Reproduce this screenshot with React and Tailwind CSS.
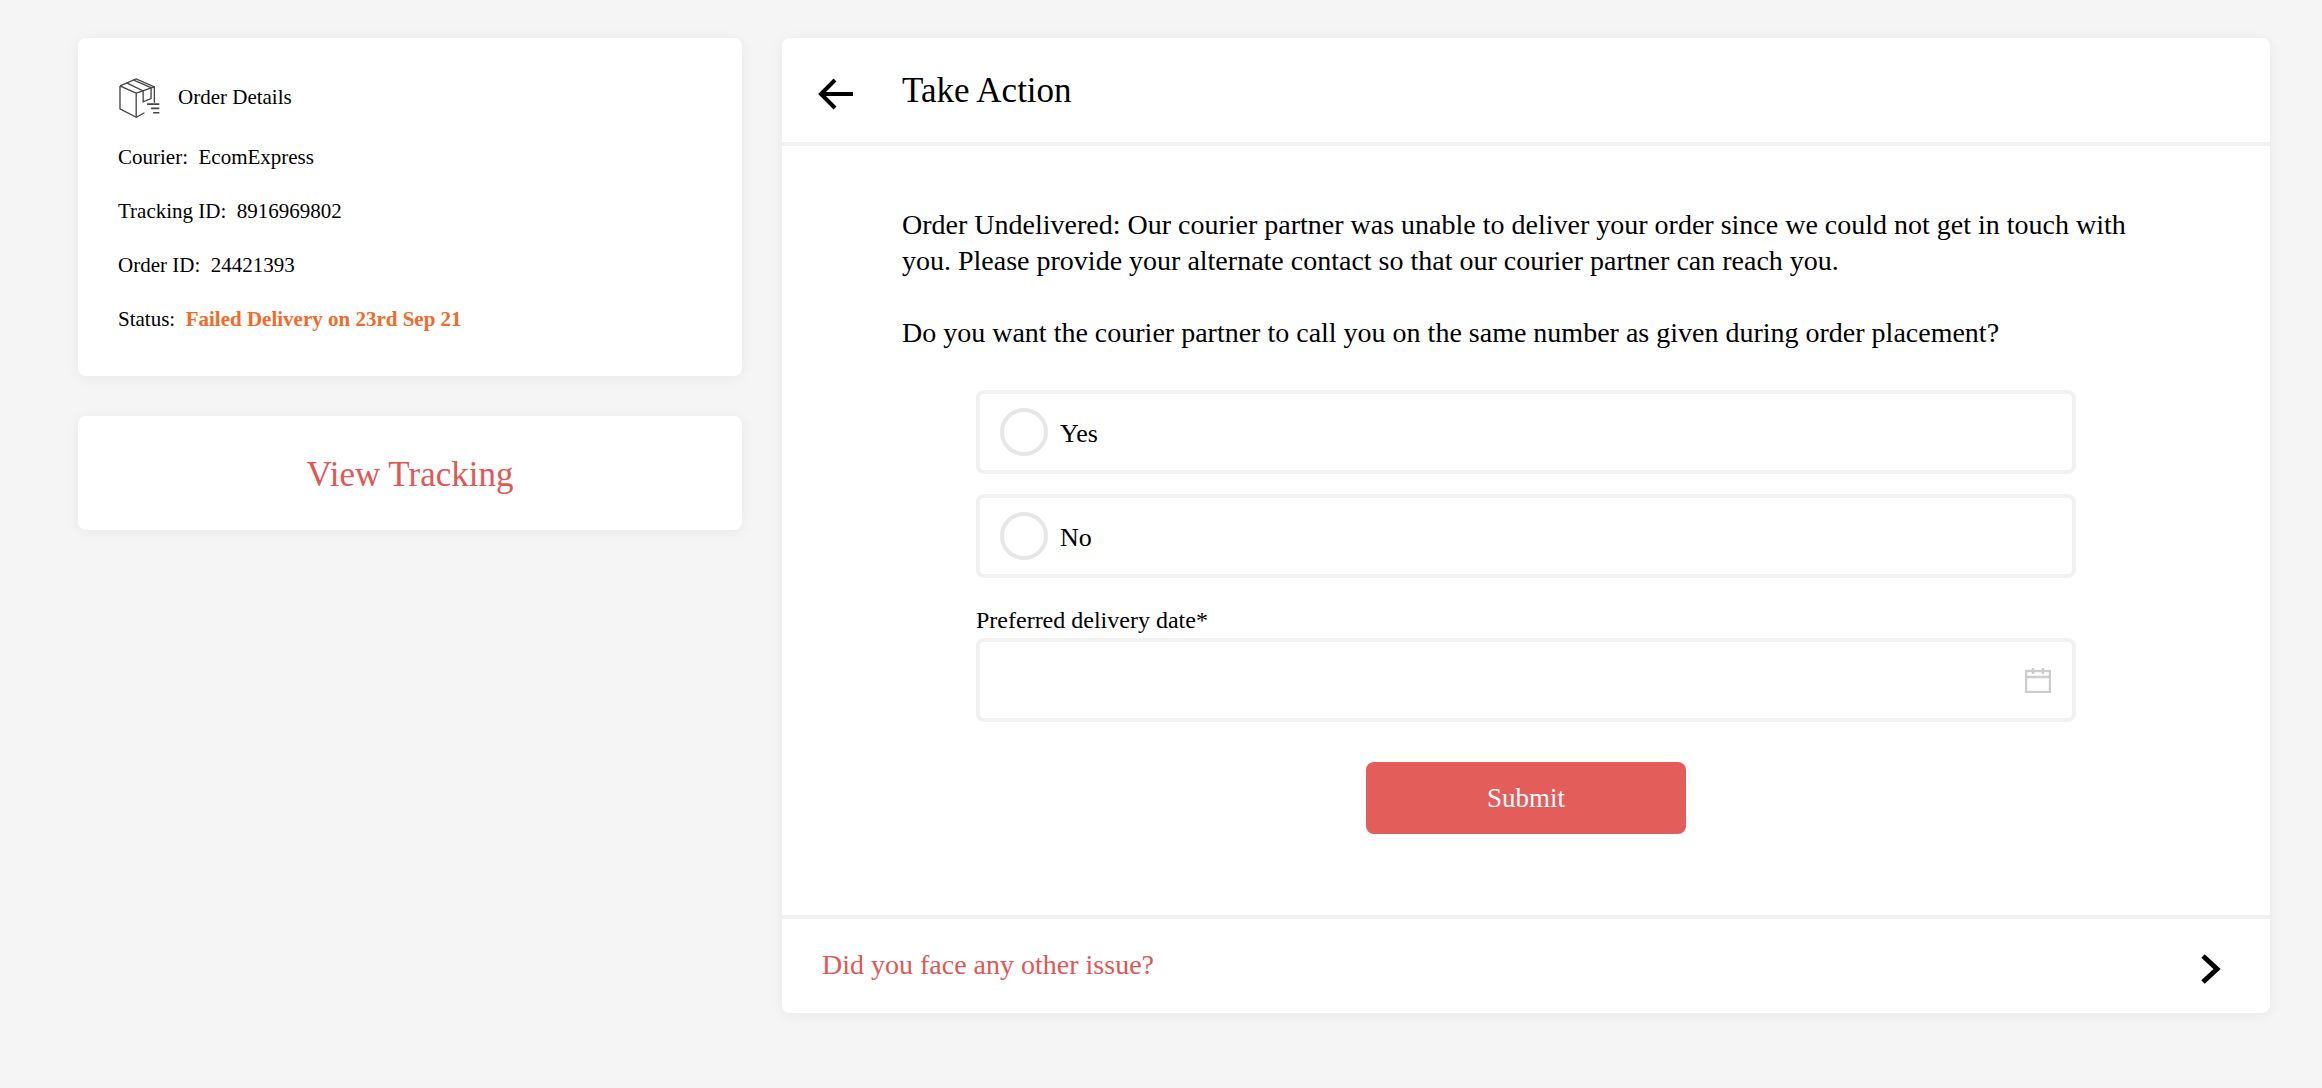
const PackageIcon = () => (
  <svg width="43" height="42" viewBox="50 20 130 127" fill="none" stroke="#444" strokeWidth="4">
    <path d="M56 47 L105 26 L160 50 V98" />
    <path d="M56 47 V116 L105 142 L130 128" />
    <path d="M56 47 L105 69 V142" />
    <path d="M105 69 L160 50" />
    <path d="M76 38 L126 62 V95 L150 85 V52 L96 29" />
    <path d="M138 102 H175 M150 115 H175 M156 128 H175" strokeWidth="5" />
  </svg>
);

const CalendarIcon = () => (
  <svg width="26" height="26" viewBox="0 0 26 26" fill="none" stroke="#cccccc" strokeWidth="2.4">
    <rect x="1" y="4" width="24" height="21" />
    <path d="M1 10 H25 M8 1 V7 M18 1 V7" />
  </svg>
);

const Radio = ({ label }) => (
  <div className="flex items-center h-[84px] border-4 border-[#f1f1f1] rounded-lg pl-[20px]">
    <div className="w-[48px] h-[48px] rounded-full border-4 border-[#e6e6e6]" />
    <div className="ml-[12px] mt-[3px] text-[26px] text-black">{label}</div>
  </div>
);

const Row = ({ label, children }) => (
  <div className="h-[54px] flex items-center text-[21px] text-black whitespace-pre">
    {label}:{"  "}
    {children}
  </div>
);

export default function App() {
  return (
    <div className="min-h-[1088px] bg-[#f5f5f5] flex items-start gap-[40px] pl-[78px] pr-[52px] pt-[38px] font-['Liberation_Serif',serif]">
      <div className="w-[664px] flex flex-col gap-[40px]">
        <div className="h-[338px] bg-white rounded-lg shadow-[0_2px_14px_rgba(0,0,0,0.06)] pl-[40px] pt-[40px]">
          <div className="flex items-center gap-[17px] h-[40px] mb-[13px] text-[21px] text-black">
            <PackageIcon />
            <span>Order Details</span>
          </div>
          <Row label="Courier">EcomExpress</Row>
          <Row label="Tracking ID">8916969802</Row>
          <Row label="Order ID">24421393</Row>
          <Row label="Status">
            <span className="font-bold text-[#f26b2a]">Failed Delivery on 23rd Sep 21</span>
          </Row>
        </div>
        <div className="h-[114px] pt-[4px] bg-white rounded-lg shadow-[0_2px_14px_rgba(0,0,0,0.06)] flex items-center justify-center text-[35px] text-[#e15754]">
          View Tracking
        </div>
      </div>

      <div className="w-[1488px] h-[975px] bg-white rounded-lg shadow-[0_2px_14px_rgba(0,0,0,0.06)] flex flex-col">
        <div className="h-[108px] shrink-0 border-b-4 border-[#f1f1f1] flex items-center pl-[36px]">
          <svg className="mt-[8px]" width="36" height="32" viewBox="0 0 36 32" fill="none" stroke="black" strokeWidth="4">
            <path d="M35 16 H3 M17 2 L3 16 L17 30" />
          </svg>
          <div className="ml-[48px] mt-[3px] text-[35px] text-black">Take Action</div>
        </div>

        <div className="flex-1 pt-[61px] pl-[120px] pr-[130px] text-[28px] leading-[36px] text-black">
          <p>
            Order Undelivered: Our courier partner was unable to deliver your order since we could not get in touch with you. Please provide your alternate contact so that our courier partner can reach you.
          </p>
          <p className="mt-[36px]">
            Do you want the courier partner to call you on the same number as given during order placement?
          </p>

          <div className="w-[1100px] ml-[74px] mt-[39px]">
            <div className="flex flex-col gap-[20px]">
              <Radio label="Yes" />
              <Radio label="No" />
            </div>
            <div className="mt-[28px] text-[24px] leading-[28px]">Preferred delivery date*</div>
            <div className="h-[84px] mt-[4px] border-4 border-[#f1f1f1] rounded-lg flex items-center justify-end pr-[21px]">
              <CalendarIcon />
            </div>
            <div className="flex justify-center mt-[40px]">
              <div className="w-[320px] h-[72px] rounded-lg bg-[#e35d5a] text-white text-[27px] flex items-center justify-center">
                Submit
              </div>
            </div>
          </div>
        </div>

        <div className="h-[98px] shrink-0 border-t-4 border-[#f1f1f1] flex items-center justify-between pl-[40px] pr-[49px] text-[28px] text-[#e15754]">
          <span className="mb-[2px]">Did you face any other issue?</span>
          <svg className="mt-[5px]" width="20" height="30" viewBox="0 0 20 30" fill="none" stroke="black" strokeWidth="5">
            <path d="M2 2 L16 15 L2 28" />
          </svg>
        </div>
      </div>
    </div>
  );
}
